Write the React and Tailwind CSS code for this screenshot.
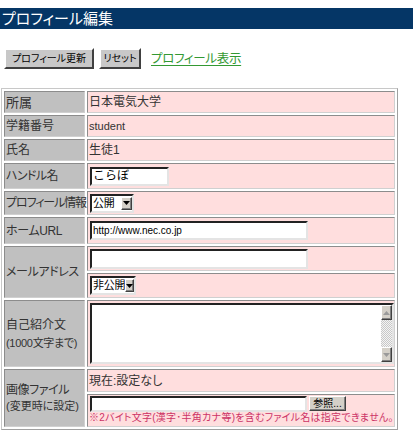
import React from "react";

const cellBorder =
  "border border-t-[#8c8c8c] border-l-[#8c8c8c] border-b-[#d0d0d0] border-r-[#d0d0d0]";
const labelCls = `bg-[#c0c0c0] ${cellBorder} flex items-center pl-[1px] text-[12px] text-[#333] [font-feature-settings:'palt'] leading-none whitespace-nowrap`;
const valueCls = `bg-[#ffdede] ${cellBorder} flex items-center pl-[1px] text-[#333] whitespace-nowrap`;
const inset =
  "bg-white border-2 border-t-[#222] border-l-[#222] border-b-[#e4e4e4] border-r-[#e4e4e4]";
const outset =
  "bg-[#d4d0c8] border border-t-white border-l-white border-b-[#404040] border-r-[#404040] shadow-[inset_-1px_-1px_0_#808080]";

function Arrow({ up = false, color = "#000" }) {
  return (
    <svg width="7" height="4" viewBox="0 0 7 4">
      {up ? (
        <polygon points="0,4 7,4 3.5,0" fill={color} />
      ) : (
        <polygon points="0,0 7,0 3.5,4" fill={color} />
      )}
    </svg>
  );
}

function Select({ text, widthCls }) {
  return (
    <div className={`${inset} ${widthCls} h-[19px] ml-[1px] flex items-center justify-between pl-[1px]`}>
      <span className="text-[11px] leading-none [font-feature-settings:'palt'] tracking-[-0.3px] text-black">{text}</span>
      <div className={`${outset} w-[11px] h-[13px] flex items-center justify-center`}>
        <Arrow />
      </div>
    </div>
  );
}

export default function App() {
  return (
    <div className="w-[413px] h-[440px] bg-white overflow-hidden font-['Liberation_Sans','Noto_Sans_CJK_JP',sans-serif]">
      <div className="h-[8px]" />
      <div className="h-[21px] bg-[#053666] text-white text-[15px] leading-none pl-[2px] flex items-center [font-feature-settings:'palt']">
        プロフィール編集
      </div>

      <div className="mt-[19px] h-[21px] flex items-center pl-[4px]">
        <div className="w-[90px] h-[21px] bg-[#c8c8c8] border-2 border-t-white border-l-white border-b-[#404040] border-r-[#404040] flex items-center justify-center text-[10px] leading-none text-black [font-feature-settings:'palt']">
          プロフィール更新
        </div>
        <div className="ml-[5px] w-[42px] h-[21px] bg-[#c8c8c8] border-2 border-t-white border-l-white border-b-[#404040] border-r-[#404040] flex items-center justify-center text-[10px] leading-none text-black [font-feature-settings:'palt']">
          リセット
        </div>
        <span className="ml-[10px] text-[12.5px] leading-[16px] text-[#339933] underline underline-offset-2 [font-feature-settings:'palt'] tracking-[-0.3px]">
          プロフィール表示
        </span>
      </div>

      <div className="mt-[19px] ml-[1px] w-[397px] border border-t-[#c8c8c8] border-l-[#c8c8c8] border-b-[#a0a0a0] border-r-[#a0a0a0] p-[2px] grid grid-cols-[81px_308px] grid-rows-[22px_22px_22px_26px_24px_27px_25px_25px_67px_23px_33px] gap-[2px]">
        <div className={`${labelCls} text-[13px]`}>所属</div>
        <div className={`${valueCls} text-[12px]`}>日本電気大学</div>

        <div className={labelCls}>学籍番号</div>
        <div className={`${valueCls} text-[11px]`}>student</div>

        <div className={labelCls}>氏名</div>
        <div className={`${valueCls} text-[12px]`}>生徒1</div>

        <div className={`${labelCls} tracking-[-0.6px]`}>ハンドル名</div>
        <div className={valueCls}>
          <div className={`${inset} w-[79px] h-[19px] ml-[1px] flex items-center pl-[1px] text-[12px] leading-none text-black`}>
            こらぼ
          </div>
        </div>

        <div className={`${labelCls} tracking-[-1.1px]`}>プロフィール情報</div>
        <div className={valueCls}>
          <Select text="公開" widthCls="w-[44px]" />
        </div>

        <div className={`${labelCls} tracking-[-0.4px]`}>ホームURL</div>
        <div className={valueCls}>
          <div className={`${inset} w-[218px] h-[19px] ml-[1px] flex items-center pl-[1px] text-[10px] leading-none text-black`}>
            http://www.nec.co.jp
          </div>
        </div>

        <div className={`${labelCls} row-span-2 tracking-[-0.4px]`}>メールアドレス</div>
        <div className={valueCls}>
          <div className={`${inset} w-[218px] h-[20px] ml-[1px]`} />
        </div>
        <div className={valueCls}>
          <Select text="非公開" widthCls="w-[46px]" />
        </div>

        <div className={`${labelCls} flex-col items-start justify-center`}>
          <span className="text-[12px] leading-[18px]">自己紹介文</span>
          <span className="text-[11px] leading-[18px] tracking-[-0.3px]">(1000文字まで)</span>
        </div>
        <div className={valueCls}>
          <div className={`${inset} w-[304px] h-[61px] ml-[1px] flex justify-end`}>
            <div className="w-[11px] h-full flex flex-col">
              <div className={`${outset} h-[15px] flex items-center justify-center`}>
                <Arrow up color="#9a9a9a" />
              </div>
              <div className="flex-1 bg-[repeating-conic-gradient(#c8c8c8_0_25%,#f4f4f4_0_50%)] bg-[length:2px_2px]" />
              <div className={`${outset} h-[15px] flex items-center justify-center`}>
                <Arrow color="#9a9a9a" />
              </div>
            </div>
          </div>
        </div>

        <div className={`${labelCls} row-span-2 flex-col items-start justify-center`}>
          <span className="text-[12px] leading-[16px] tracking-[-0.4px]">画像ファイル</span>
          <span className="text-[11px] leading-[16px]">(変更時に設定)</span>
        </div>
        <div className={`${valueCls} text-[12px] [font-feature-settings:'palt']`}>現在:設定なし</div>
        <div className={`${valueCls} flex-col items-start justify-start`}>
          <div className="mt-[1px] ml-[1px] flex items-start">
            <div className={`${inset} w-[217px] h-[16px]`} />
            <div className={`${outset} ml-[2px] w-[37px] h-[15px] flex items-center justify-center text-[10px] leading-none text-black`}>
              参照...
            </div>
          </div>
          <div className="text-[10px] leading-[12px] text-[#cc3366] [font-feature-settings:'palt'] tracking-[0.25px]">
            ※2バイト文字(漢字･半角カナ等)を含むファイル名は指定できません。
          </div>
        </div>
      </div>
    </div>
  );
}
